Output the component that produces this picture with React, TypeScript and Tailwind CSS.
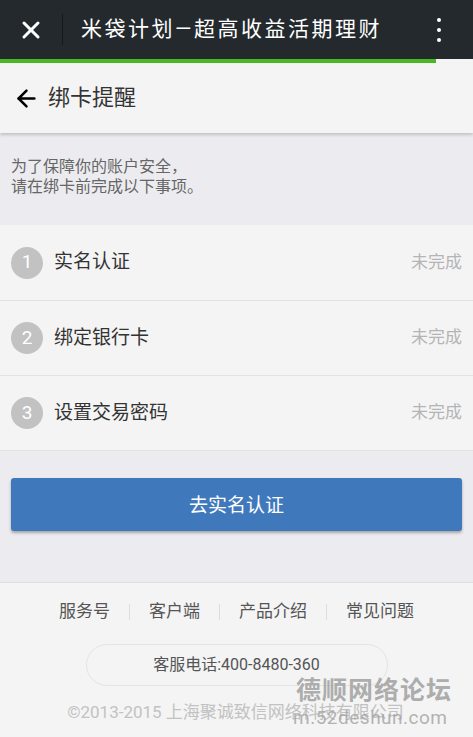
import { ArrowLeft, X } from "lucide-react";

const steps = [
  { no: 1, text: "实名认证" },
  { no: 2, text: "绑定银行卡" },
  { no: 3, text: "设置交易密码" },
];

const links = ["服务号", "客户端", "产品介绍", "常见问题"];

export default function App() {
  return (
    <div
      className="relative w-[473px] h-[737px] overflow-hidden bg-[#ececf0]"
      style={{ fontFamily: "Roboto, 'Noto Sans CJK SC', sans-serif" }}
    >
      {/* WeChat bar */}
      <div className="flex items-center h-[59px] bg-[#23292d]">
        <div className="w-[62px] flex justify-center">
          <X className="w-[28px] h-[28px] text-white" strokeWidth={2.6} />
        </div>
        <div className="w-px h-[31px] bg-[#14181b]" />
        <div className="ml-[18px] flex-1 text-white text-[21px] tracking-[2.5px] leading-none">
          米袋计划—超高收益活期理财
        </div>
        <div className="w-[70px] flex flex-col items-center gap-[6px] pl-[2px]">
          <span className="w-[4px] h-[4px] rounded-full bg-white" />
          <span className="w-[4px] h-[4px] rounded-full bg-white" />
          <span className="w-[4px] h-[4px] rounded-full bg-white" />
        </div>
      </div>
      <div className="h-[4px] bg-[#f4f4f4]">
        <div className="h-full w-[436px] bg-[#48b824]" />
      </div>

      {/* header */}
      <div className="relative z-10 flex items-center h-[70px] bg-[#f4f4f4] shadow-[0_2px_3px_rgba(0,0,0,0.18)]">
        <ArrowLeft className="ml-[13px] w-[27px] h-[27px] text-black" strokeWidth={2.2} />
        <span className="ml-[8px] text-[22px] text-[#333] leading-none">绑卡提醒</span>
      </div>

      {/* intro */}
      <div className="h-[92px] pt-[24px] pl-[11px] text-[16px] leading-[20px] text-[#666]">
        <p>为了保障你的账户安全，</p>
        <p>请在绑卡前完成以下事项。</p>
      </div>

      {/* steps */}
      <div className="bg-[#f4f4f4] border-b border-[#e2e2e2]">
        {steps.map((s, i) => (
          <div
            key={s.no}
            className={`flex items-center h-[75px] px-[11px] ${i > 0 ? "border-t border-[#e2e2e2]" : ""}`}
          >
            <span className="w-[32px] h-[32px] rounded-full bg-[#c2c2c2] text-white text-[19px] flex items-center justify-center">
              {s.no}
            </span>
            <span className="ml-[11px] flex-1 text-[19px] text-[#333]">{s.text}</span>
            <span className="text-[17px] text-[#b4b4b4]">未完成</span>
          </div>
        ))}
      </div>

      {/* action */}
      <div className="h-[131px] pt-[27px] px-[11px]">
        <button className="w-full h-[53px] pt-[3px] rounded-[3px] bg-[#3f79bc] text-white text-[19px] shadow-[0_2px_3px_rgba(0,0,0,0.3)]">
          去实名认证
        </button>
      </div>

      {/* footer */}
      <div className="h-[155px] bg-[#f4f4f4] border-t border-[#dedede]">
        <div className="flex justify-center items-center pt-[16px] text-[17px] text-[#555]">
          {links.map((l, i) => (
            <div key={l} className="flex items-center">
              {i > 0 && <span className="w-px h-[16px] bg-[#dddddd] mx-[19px]" />}
              <span>{l}</span>
            </div>
          ))}
        </div>
        <div className="mx-auto mt-[19px] w-[302px] h-[42px] rounded-full border border-[#e4e4e4] flex items-center justify-center text-[16px] text-[#555]">
          客服电话:400-8480-360
        </div>
        <div className="mt-[14px] text-center text-[17px] text-[#c2c2c2] pr-[2px]">
          ©2013-2015 上海聚诚致信网络科技有限公司
        </div>
      </div>

      {/* watermark */}
      <div className="absolute left-[296px] top-[678px] text-[25px] font-bold text-[#9a9a9a]/80 leading-none tracking-[1px]">
        德顺网络论坛
      </div>
      <div className="absolute left-[293px] top-[708px] text-[19px] text-[#a0a0a0]/80 leading-none tracking-[0.5px]">
        m.52deshun.com
      </div>
    </div>
  );
}
